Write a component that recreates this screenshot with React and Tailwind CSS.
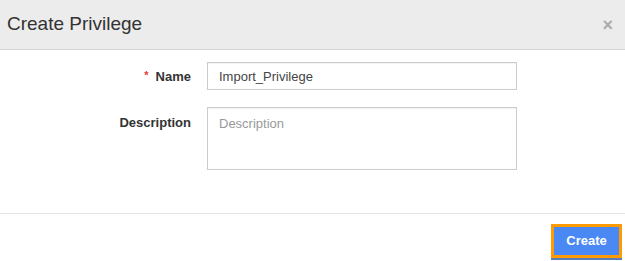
const App = () => {
  return (
    <div className="w-[625px] h-[261px] bg-white font-['Liberation_Sans',Arial,sans-serif] overflow-hidden">
      {/* Header */}
      <div className="h-[50px] bg-[#ececec] border-b border-[#d4d4d4] flex items-center justify-between pl-[7px] pr-[12px]">
        <h2 className="text-[19px] text-[#333] leading-none pb-[2px]">Create Privilege</h2>
        <span className="text-[18px] font-bold text-[#aaa] leading-none">×</span>
      </div>

      {/* Body */}
      <div className="pt-[12px] pb-[43px]">
        <div className="flex items-center">
          <label className="w-[191px] text-right text-[13px] font-bold text-[#333] pt-[1px]">
            <span className="text-[#e53935] mr-[7px] text-[11px] align-top">*</span>
            Name
          </label>
          <input
            defaultValue="Import_Privilege"
            className="ml-[16px] w-[310px] h-[28px] border border-[#ccc] px-[11px] text-[13px] text-[#444] outline-none shadow-[inset_0_1px_1px_rgba(0,0,0,0.05)]"
          />
        </div>
        <div className="flex items-start mt-[17px]">
          <label className="w-[191px] text-right text-[13px] font-bold text-[#333] pt-[6px]">
            Description
          </label>
          <textarea
            placeholder="Description"
            className="ml-[16px] w-[310px] h-[63px] border border-[#ccc] px-[11px] py-[6px] text-[13px] text-[#444] placeholder:text-[#999] outline-none resize-none shadow-[inset_0_1px_1px_rgba(0,0,0,0.05)]"
          />
        </div>
      </div>

      {/* Footer */}
      <div className="border-t border-[#e5e5e5] flex justify-end pt-[10px] pr-[3px]">
        <button className="w-[71px] h-[34px] border-[3px] border-[#ff9a00] bg-[#4a89f3] text-white text-[13px] font-bold shadow-[0_2px_0_#5a7fb8]">
          Create
        </button>
      </div>
    </div>
  );
};

export default App;
